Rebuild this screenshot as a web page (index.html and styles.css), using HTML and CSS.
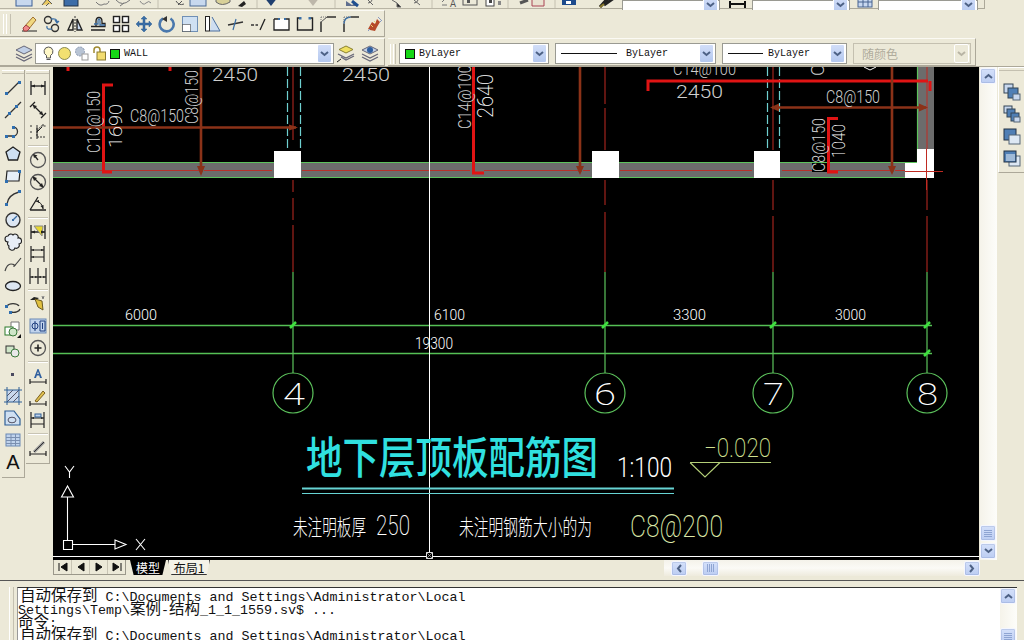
FILE: index.html
```html
<!DOCTYPE html>
<html lang="zh-CN">
<head>
<meta charset="utf-8">
<title>AutoCAD</title>
<link rel="stylesheet" href="styles.css">
</head>
<body>
<div class="app">
  <div class="row1">
    <div class="r1-icons">
      <svg class="clip" width="590" height="9" viewBox="0 0 590 9"><g class="c1">
        <rect x="16" y="-6" width="16" height="12" fill="#c7d8ee" stroke="#3a5f95"/>
        <path d="M42 5l5-6 5 5M46 6l3-3" fill="#e8c860" stroke="#555"/>
        <rect x="64" y="-5" width="14" height="11" fill="#3d6da8" stroke="#234"/>
        <path d="M96 2q4 5 8 2q4 1 5-3" fill="none" stroke="#777"/>
        <path d="M116 0q6 7 14 0M120 6l4-3" fill="none" stroke="#777"/>
        <path d="M140 1q3 5 6 2t5 0" fill="none" stroke="#888"/>
        <path d="M178 5l4-4M176 1q3 5 8 3" fill="none" stroke="#555"/>
        <rect x="190" y="-6" width="16" height="12" fill="#c7d8ee" stroke="#4a6a95"/>
        <path d="M216 2q6 5 14 0v-3h-14z" fill="#d8d098" stroke="#666"/>
        <path d="M238 6l6-5 2 3-4 3z" fill="#222"/>
        <path d="M264 -3h14l-7 9z" fill="#1f3f6f"/>
        <path d="M306 -3h14l-7 9z" fill="#bdb7aa"/>
        <path d="M346 1l6 4 4-3v4h-10z" fill="#5f6f8f"/><path d="M352 1l6 5" stroke="#1f4f8f" stroke-width="3"/>
        <path d="M368 0l5 5M372 0a4 4 0 0 1-4 3" fill="none" stroke="#666"/>
        <path d="M392 0l5 3M397 3v4h4z" fill="#222" stroke="#666"/>
        <path d="M414 0l6 5M418 0a4 4 0 0 1-4 3" fill="none" stroke="#666"/>
        <path d="M442 2l3-3M442 5h5" fill="none" stroke="#777"/>
        <text class="r1-a" x="450" y="7">A</text>
        <rect x="463" y="-4" width="14" height="9" fill="none" stroke="#555"/><rect x="467" y="-1" width="3" height="4" fill="#555"/>
        <rect x="486" y="-4" width="8" height="10" fill="#fff" stroke="#444"/><rect x="489" y="0" width="3" height="3" fill="#444"/>
        <rect x="498" y="1" width="3" height="4" fill="#888"/>
        <path d="M520 3l8-3" stroke="#555" stroke-width="3"/>
        <path d="M532 -2h12v8h-12z" fill="#e9e2d0" stroke="#a45"/>
        <path d="M562 -6h14v11h-14z" fill="#1c4a8c"/><rect x="566" y="1" width="5" height="3" fill="#fff"/>
      </g>
      <path d="M158 0v8M257 0v8M335 0v8M432 0v8M508 0v8M555 0v8" stroke="#c4c0b0"/></svg>
    </div>
    <div class="r1-mid">
      <svg class="r1-ic" width="22" height="9" viewBox="0 0 22 9"><path d="M4 7l8-9M8 5l10-7" stroke="#222" stroke-width="3" fill="none"/><path d="M4 7l4-3" stroke="#8a7a2a" stroke-width="2"/></svg>
      <div class="combo r1-combo c98"><span class="mono">–</span><span class="cbtn"><svg class="chev" width="9" height="6" viewBox="0 0 9 6"><path d="M1 1l3.5 3L8 1" /></svg></span></div>
      <svg class="r1-ic" width="22" height="9" viewBox="0 0 22 9"><path d="M4 4h15M4 1v7M19 1v7" stroke="#111" stroke-width="2" fill="none"/></svg>
      <div class="combo r1-combo c98"><span class="cbtn"><svg class="chev" width="9" height="6" viewBox="0 0 9 6"><path d="M1 1l3.5 3L8 1" /></svg></span></div>
      <svg class="r1-ic r1-last" width="22" height="9" viewBox="0 0 22 9"><rect x="4" y="-3" width="14" height="10" fill="#c8d8f0" stroke="#47638f"/><path d="M4 2h14M9 -3v10M14 -3v10" stroke="#47638f"/></svg>
      <div class="combo r1-combo c100"><span class="cbtn"><svg class="chev" width="9" height="6" viewBox="0 0 9 6"><path d="M1 1l3.5 3L8 1" /></svg></span></div>
    </div>
  </div>

  <div class="row2">
    <div class="tb-h t-mod">
      <span class="handle"></span>
      <svg class="ih" viewBox="0 0 18 18"><path d="M2 16h15" stroke="#222"/><path d="M4 12L13 2l3 3-8 10z" fill="#f0d880" stroke="#a07030"/><path d="M3 13l3-3 4 3-3 3H4z" fill="#e88" stroke="#a04040"/></svg>
      <svg class="ih" viewBox="0 0 18 18"><circle cx="5" cy="5" r="3.5" fill="none" stroke="#333" stroke-width="1.4"/><circle cx="12" cy="13" r="3.5" fill="none" stroke="#333" stroke-width="1.4"/><path d="M8 4q6-1 6 3M9 14q-6 1-5-3M12 5l2 3 2-2" fill="none" stroke="#3a6ea5" stroke-width="1.3"/></svg>
      <svg class="ih" viewBox="0 0 18 18"><path d="M9 1v16" stroke="#333" stroke-dasharray="2 1"/><path d="M7 4v11H2z" fill="none" stroke="#222" stroke-width="1.4"/><path d="M11 4v11h5z" fill="#c8d8ee" stroke="#222" stroke-width="1.4"/></svg>
      <svg class="ih" viewBox="0 0 18 18"><path d="M2 15h14M2 11.500h5v-5q0-4 3-4t3 4v2h3v3z" fill="none" stroke="#222" stroke-width="1.3"/><path d="M5 9h4V6q0-2 1-2t1 2v4h5" fill="none" stroke="#3a6ea5" stroke-width="1.3"/></svg>
      <svg class="ih" viewBox="0 0 18 18"><g fill="#fff" stroke="#222" stroke-width="1.4"><rect x="1.500" y="1.500" width="6" height="6"/><rect x="10.500" y="1.500" width="6" height="6"/><rect x="1.500" y="10.500" width="6" height="6"/><rect x="10.500" y="10.500" width="6" height="6"/></g></svg>
      <svg class="ih" viewBox="0 0 18 18"><path d="M9 1l3 3h-2v4h4V6l3 3-3 3v-2h-4v4h2l-3 3-3-3h2v-4H4v2L1 9l3-3v2h4V4H6z" fill="#3a6ea5" stroke="#2f5f95" stroke-width=".5"/></svg>
      <svg class="ih" viewBox="0 0 18 18"><path d="M12.500 3.500A7 7 0 1 1 5 3.400" fill="none" stroke="#4a78ad" stroke-width="2.600"/><path d="M9 1v6l-5-3z" fill="#333"/></svg>
      <svg class="ih" viewBox="0 0 18 18"><rect x="1.500" y="1.500" width="15" height="15" fill="#cfe0f2" stroke="#6f8fb5"/><rect x="1.500" y="9.500" width="8" height="7" fill="#fff" stroke="#222" stroke-dasharray="1 1"/></svg>
      <svg class="ih" viewBox="0 0 18 18"><path d="M6 16h10L8 2" fill="#cfdef0" stroke="#4a6f9f"/><rect x="1.500" y="1.500" width="4" height="14.500" fill="#fff" stroke="#222"/></svg>
      <svg class="ih" viewBox="0 0 18 18"><path d="M1 10l15-3" stroke="#333" stroke-width="1.300"/><path d="M9 4l-3 11" stroke="#3a6ea5" stroke-width="1.200"/></svg>
      <svg class="ih" viewBox="0 0 18 18"><path d="M1 10h7" stroke="#333" stroke-width="1.300" stroke-dasharray="3 1.500"/><path d="M15 4l-5 11" stroke="#222" stroke-width="1.300"/></svg>
      <svg class="ih" viewBox="0 0 18 18"><path d="M1 4v11h15V4h-4M6 4H1" fill="#fff" stroke="#222" stroke-width="1.300"/><rect x="5" y="3" width="2" height="2" fill="#3a6ea5"/><rect x="11" y="3" width="2" height="2" fill="#3a6ea5"/></svg>
      <svg class="ih" viewBox="0 0 18 18"><path d="M4 3H1.500v12h15V3H14" fill="none" stroke="#222" stroke-width="1.400"/><rect x="3" y="2" width="2.500" height="2.500" fill="#3a6ea5"/><rect x="12.500" y="2" width="2.500" height="2.500" fill="#3a6ea5"/></svg>
      <svg class="ih" viewBox="0 0 18 18"><path d="M2 17V7" stroke="#222" stroke-width="1.400"/><path d="M8 2h9" stroke="#222" stroke-width="1.400"/><path d="M2 7l6-5" stroke="#555"/><path d="M2 2v5M2 2h6" stroke="#777" stroke-dasharray="1 1"/></svg>
      <svg class="ih" viewBox="0 0 18 18"><path d="M2 17V9" stroke="#222" stroke-width="1.400"/><path d="M9 2h8" stroke="#222" stroke-width="1.400"/><path d="M2 9q0-7 7-7" fill="none" stroke="#3a6ea5" stroke-width="1.500"/><path d="M2 2v7M2 2h7" stroke="#777" stroke-dasharray="1 1"/></svg>
      <svg class="ih" viewBox="0 0 18 18"><path d="M3 14l4-7 3 2 2-5 3 3-3 5-2 4-5-1z" fill="#b64a2a"/><path d="M6 10l2 2M9 6l2 2" stroke="#f0d070"/><path d="M13 2l3 3M3 16l2-2M15 7l2-2" stroke="#8a9ac0"/></svg>
    </div>
  </div>

  <div class="row3">
    <div class="tb-h t-layer">
      <svg class="ih lay1" viewBox="0 0 18 18"><path d="M9 9L1 5l8-4 8 4z" fill="#c0cfe6" stroke="#667"/><path d="M1 9l8 4 8-4M1 12l8 4 8-4" fill="none" stroke="#667" stroke-width="1.200"/></svg>
      <div class="combo c299">
        <svg class="li" width="13" height="15" viewBox="0 0 13 15"><path d="M6.500 1a4.500 4.500 0 0 0-2 8.500V12h4V9.500a4.500 4.500 0 0 0-2-8.500z" fill="#fff8c8" stroke="#555"/><path d="M4.500 13.500h4" stroke="#555"/></svg>
        <svg class="li" width="15" height="15" viewBox="0 0 15 15"><circle cx="7.500" cy="7.500" r="6" fill="#f2e070" stroke="#8a8a50"/></svg>
        <svg class="li" width="16" height="15" viewBox="0 0 16 15"><circle cx="6" cy="5.500" r="4.500" fill="#b8c4d4" stroke="#8a98b0" stroke-dasharray="2 1"/><rect x="8" y="8" width="6" height="6" fill="#fff" stroke="#999"/></svg>
        <svg class="li" width="15" height="15" viewBox="0 0 15 15"><path d="M2 7V4a3 3 0 0 1 6 0v2" fill="none" stroke="#a08a30" stroke-width="1.500"/><rect x="5" y="6" width="8.500" height="8" fill="#f2dc70" stroke="#8a7a30"/></svg>
        <span class="sw"></span><span class="mono wall">WALL</span>
        <span class="cbtn"><svg class="chev" width="9" height="6" viewBox="0 0 9 6"><path d="M1 1l3.500 3L8 1"/></svg></span>
      </div>
      <svg class="ih lay2" viewBox="0 0 18 18"><path d="M9 8L2 4.500 9 1l7 3.500z" fill="#f0e060" stroke="#8a8030"/><path d="M1 9l8 4 8-4M4 12l5 3 8-4" fill="none" stroke="#667" stroke-width="1.200"/><path d="M0 17l4-3" stroke="#222"/></svg>
      <svg class="ih lay3" viewBox="0 0 18 18"><path d="M9 9L1 5l8-4 8 4z" fill="#c0cfe6" stroke="#667"/><path d="M1 9l8 4 8-4M1 12l8 4 8-4" fill="none" stroke="#667" stroke-width="1.200"/><circle cx="9" cy="5" r="3" fill="#2f5f9f"/></svg>
    </div>
    <div class="tb-h t-prop">
      <span class="handle h-prop"></span>
      <div class="combo c150"><span class="sw sw-b"></span><span class="mono">ByLayer</span><span class="cbtn"><svg class="chev" width="9" height="6" viewBox="0 0 9 6"><path d="M1 1l3.500 3L8 1"/></svg></span></div>
      <div class="combo c160"><span class="ln l56"></span><span class="mono">ByLayer</span><span class="cbtn"><svg class="chev" width="9" height="6" viewBox="0 0 9 6"><path d="M1 1l3.500 3L8 1"/></svg></span></div>
      <div class="combo c125"><span class="ln l35"></span><span class="mono">ByLayer</span><span class="cbtn"><svg class="chev" width="9" height="6" viewBox="0 0 9 6"><path d="M1 1l3.500 3L8 1"/></svg></span></div>
      <div class="combo c118 dis"><span class="distext">随颜色</span><span class="cbtn"><svg class="chev" width="9" height="6" viewBox="0 0 9 6"><path d="M1 1l3.500 3L8 1"/></svg></span></div>
    </div>
  </div>

  <div class="main">
    <div class="left">
      <div class="tb-v">
        <span class="vh"></span>
        <svg class="iv" viewBox="0 0 18 18"><path d="M3 15L15 3" stroke="#333" stroke-width="1.300"/><rect x="1" y="13" width="3" height="3" fill="#2f6fb0"/><rect x="14" y="2" width="3" height="3" fill="#2f6fb0"/></svg>
        <svg class="iv" viewBox="0 0 18 18"><path d="M1 17L17 1" stroke="#333" stroke-width="1.300"/><rect x="4" y="11" width="3" height="3" fill="#2f6fb0"/><rect x="11" y="4" width="3" height="3" fill="#2f6fb0"/></svg>
        <svg class="iv" viewBox="0 0 18 18"><path d="M2 13h7M9 13a4.500 4.500 0 0 0 0-9" fill="none" stroke="#333" stroke-width="1.300"/><rect x="1" y="12" width="3" height="3" fill="#2f6fb0"/><rect x="8" y="12" width="3" height="3" fill="#2f6fb0"/><rect x="8" y="3" width="3" height="3" fill="#2f6fb0"/></svg>
        <svg class="iv" viewBox="0 0 18 18"><path d="M9 2l7 5-2.500 8h-9L2 7z" fill="#cfe0f2" stroke="#222" stroke-width="1.300"/></svg>
        <svg class="iv" viewBox="0 0 18 18"><path d="M3 4h13l-1 10H2z" fill="#e6eef8" stroke="#222" stroke-width="1.200"/><rect x="1" y="13" width="3" height="3" fill="#2f6fb0"/><rect x="14" y="3" width="3" height="3" fill="#2f6fb0"/></svg>
        <svg class="iv" viewBox="0 0 18 18"><path d="M3 15q1-9 12-12" fill="none" stroke="#333" stroke-width="1.300"/><rect x="1" y="14" width="3" height="3" fill="#2f6fb0"/><rect x="14" y="1" width="3" height="3" fill="#2f6fb0"/></svg>
        <svg class="iv" viewBox="0 0 18 18"><circle cx="9" cy="9" r="7" fill="#dce6f2" stroke="#333" stroke-width="1.400"/><path d="M9 9l4-4" stroke="#3a6ea5" stroke-width="1.200"/><rect x="8" y="8" width="2" height="2" fill="#3a6ea5"/></svg>
        <svg class="iv" viewBox="0 0 18 18"><path d="M4 9a3 3 0 0 1 0-6 3 3 0 0 1 5-1 3 3 0 0 1 5 3 3 3 0 0 1 1 6 3 3 0 0 1-4 4 3 3 0 0 1-6-2 3 3 0 0 1-1-4z" fill="#e8eef6" stroke="#222" stroke-width="1.100"/></svg>
        <svg class="iv" viewBox="0 0 18 18"><path d="M1 16q2-7 6-7t3 2 7-8" fill="none" stroke="#444" stroke-width="1.200"/></svg>
        <svg class="iv" viewBox="0 0 18 18"><ellipse cx="9" cy="9" rx="7.500" ry="4.500" fill="#dce6f2" stroke="#222" stroke-width="1.300"/></svg>
        <svg class="iv" viewBox="0 0 18 18"><path d="M3 7a6.500 4 0 0 1 12 0M16 10a6.500 4 0 0 1-9 3" fill="none" stroke="#333" stroke-width="1.300"/><rect x="1" y="6" width="3" height="3" fill="#2f6fb0"/><rect x="5" y="12" width="3" height="3" fill="#2f6fb0"/></svg>
        <svg class="iv" viewBox="0 0 18 18"><path d="M7 1h8v8H7z" fill="#fff" stroke="#777"/><rect x="1" y="6" width="8" height="8" fill="#fff" stroke="#2a7a2a"/><circle cx="9" cy="11" r="4" fill="#cfe5c8" stroke="#3a7a3a"/><path d="M17 17h-4l4-4z" fill="#111"/></svg>
        <svg class="iv" viewBox="0 0 18 18"><rect x="2" y="3" width="8" height="7" fill="#cfe5c8" stroke="#333"/><circle cx="11" cy="10" r="4" fill="#e8e8e8" stroke="#3a7a3a"/></svg>
        <svg class="iv" viewBox="0 0 18 18"><rect x="7" y="8" width="3" height="3" fill="#4a4a60"/></svg>
        <svg class="iv" viewBox="0 0 18 18"><rect x="3" y="3" width="12" height="12" fill="#c8d8ec"/><path d="M3 9l6-6M3 15L15 3M9 15l6-6" stroke="#556" /><path d="M3 0v18M15 0v18M0 3h18M0 15h18" stroke="#2f5f95"/></svg>
        <svg class="iv" viewBox="0 0 18 18"><path d="M1 2h9l6 8v6H1z" fill="#cfe0f2" stroke="#2f5f95" stroke-width="1.200"/><ellipse cx="8" cy="11" rx="4" ry="2.800" fill="none" stroke="#556"/></svg>
        <svg class="iv" viewBox="0 0 18 18"><rect x="2" y="3" width="14" height="12" fill="#c0d3ec" stroke="#6a8ab5"/><path d="M2 6.500h14M2 9.500h14M2 12.500h14M7 3v12M11.500 3v12" stroke="#7a8fb0"/></svg>
        <span class="iv-a">A</span>
      </div>
      <div class="tb-v t2">
        <span class="vh"></span>
        <svg class="iv" viewBox="0 0 18 18"><path d="M2 2v14M16 2v14" stroke="#222" stroke-width="1.300"/><path d="M2 7h14" stroke="#222" stroke-width="1.300"/><path d="M2 7l4-1.500v3zM16 7l-4-1.500v3z" fill="#222"/></svg>
        <svg class="iv" viewBox="0 0 18 18"><path d="M1 6l5-5M12 17l5-5" stroke="#222" stroke-width="1.300"/><path d="M4 4l10 10" stroke="#222" stroke-width="1.300"/><path d="M4 4l4 1-3 3zM14 14l-4-1 3-3z" fill="#222"/></svg>
        <svg class="iv" viewBox="0 0 18 18"><path d="M8 2v6l4-5h5M8 8v6M8 14h8M1 3h3M1 9h3M1 15h3M14 1v3" fill="none" stroke="#333" stroke-dasharray="2 1"/><path d="M8 4v12M8 9l5-5" stroke="#222" fill="none"/></svg>
        <span class="vsep"></span>
        <svg class="iv" viewBox="0 0 18 18"><circle cx="9" cy="9" r="7.500" fill="none" stroke="#555" stroke-width="1.300"/><path d="M9 9L5 4" stroke="#222" stroke-width="1.300"/><path d="M4 3l4.500 1.500L5 7z" fill="#222"/></svg>
        <svg class="iv" viewBox="0 0 18 18"><circle cx="9" cy="9" r="7.500" fill="none" stroke="#555" stroke-width="1.300"/><path d="M4 4l10 10" stroke="#222" stroke-width="1.300"/><path d="M3.500 3.500l4.500 1.500-3 3zM14.500 14.500l-4.500-1.500 3-3z" fill="#222"/></svg>
        <svg class="iv" viewBox="0 0 18 18"><path d="M1 15h16M1 15L9 2" stroke="#222" stroke-width="1.300" fill="none"/><path d="M7 6q6 1 7 8" stroke="#222" fill="none"/><path d="M14.500 14l-3-3 3-1zM7 6l3-1v3z" fill="#222"/></svg>
        <span class="vsep"></span>
        <svg class="iv" viewBox="0 0 18 18"><path d="M2 2v14M16 2v14M2 9h14" stroke="#222" stroke-width="1.300"/><path d="M5 3l9 0-1 10z" fill="#e8d830" stroke="#888"/><path d="M2 9l4-1.500v3zM16 9l-4-1.500v3z" fill="#222"/></svg>
        <svg class="iv" viewBox="0 0 18 18"><path d="M2 1v16M15 1v16M2 5h13M2 12h13" stroke="#222" stroke-width="1.200"/><path d="M2 5l3-1v2zM15 5l-3-1v2zM2 12l3-1v2z" fill="#222"/></svg>
        <svg class="iv" viewBox="0 0 18 18"><path d="M1 1v16M9 1v16M17 1v16M1 10h16" stroke="#222" stroke-width="1.200"/><path d="M1 10l3-1v2zM9 10l-3-1v2zM9 10l3-1v2zM17 10l-3-1v2z" fill="#222"/></svg>
        <span class="vsep"></span>
        <svg class="iv" viewBox="0 0 18 18"><path d="M1 5l4-3 5 1-3 2z" fill="#222"/><path d="M6 4l7 2 1 9-5-3z" fill="#e0c040" stroke="#6a5a20"/><path d="M13 1l1 3M15 1l-1 3" stroke="#777"/></svg>
        <svg class="iv" viewBox="0 0 18 18"><rect x="1" y="2" width="16" height="14" fill="#c0d3ec" stroke="#6a8ab5"/><circle cx="6" cy="9" r="3" fill="none" stroke="#1f3f7f"/><path d="M6 4v10M11 4h5v10h-5zM13.500 6v6" fill="none" stroke="#1f3f7f"/></svg>
        <svg class="iv" viewBox="0 0 18 18"><circle cx="9" cy="9" r="7.500" fill="none" stroke="#555" stroke-width="1.300"/><path d="M9 5.500v7M5.500 9h7" stroke="#222" stroke-width="1.600"/></svg>
        <span class="vsep"></span>
        <svg class="iv" viewBox="0 0 18 18"><path d="M1 12v5M17 12v5M1 15h16" stroke="#222" stroke-width="1.200"/><path d="M5 11l3.500-9h1L13 11h-2l-.8-2.500H7.800L7 11zM8.200 7h1.600L9 4.500z" fill="#2f5f9f"/></svg>
        <svg class="iv" viewBox="0 0 18 18"><path d="M1 12v5M17 12v5M1 15h16" stroke="#222" stroke-width="1.200"/><path d="M6 12l8-10 2 2-8 9z" fill="#e0c050" stroke="#7a6020"/></svg>
        <svg class="iv" viewBox="0 0 18 18"><path d="M2 1v16M15 1v16M2 7h13M2 13h13" stroke="#222" stroke-width="1.200"/><path d="M2 7l3-1v2zM15 7l-3-1v2z" fill="#222"/><rect x="6" y="3" width="6" height="3" fill="#c0d3ec" stroke="#2f5f95"/></svg>
        <span class="vsep"></span>
        <svg class="iv" viewBox="0 0 18 18"><path d="M1 12v5M17 12v5M1 15h16" stroke="#222" stroke-width="1.200"/><path d="M5 13L15 3" stroke="#999" stroke-width="3"/><path d="M5 13L15 3" stroke="#333"/></svg>
      </div>
    </div>

    <div class="center">
      <div class="canvas-row">
        <div class="canvas">
          <svg class="draw" width="926" height="493" viewBox="53 67 926 493">
            <rect class="band" x="53" y="162" width="852" height="16"/>
            <rect class="band" x="917" y="67" width="17" height="83"/>
            <path class="g" d="M53 162.500H917M53 177.500H905M917.500 67V162"/>
            <path class="rc" d="M53 170.500H200M204 170.500H272M302 170.500H470M484 170.500H578M583 170.500H590M620 170.500H752M782 170.500H890M895 170.500H905" />
            <path class="rt" d="M293 67V140M293 180V192M293 198V220M293 225V272M605 67V104M605 108V150M605 180V205M605 212V272M773 67V150M773 180V210M773 216V272M927 67V150M927 180V210M927 216V272"/>
            <path class="cy" d="M287.500 67V150M300.500 67V150M767.500 67V151M779.500 67V151"/>
            <path class="rb" d="M113 85H103.500V172H112"/>
            <path class="rb" d="M473.500 67V173H484"/>
            <path class="rb" d="M648 91V81H928M930 81V91"/>
            <path class="rb" d="M838 118.500H828.500V172H838"/>
            <path class="rb" d="M68 67V71M170 67V71"/>
            <path class="br" d="M53 127.500H296M201 67V172M580 67V172M892 67V172M772 107.500H926"/>
            <path class="brf" d="M298 127.500l-9-3v6zM201 176l-4-10h8zM580 175l-4-9h8zM892 175l-4-9h8zM770 107.500l9-4v8zM928 107.500l-9-4v8z"/>
            <rect class="blk" x="812" y="163" width="15" height="9"/>
            <rect class="wh" x="274" y="151" width="27" height="27"/>
            <rect class="wh" x="592" y="151" width="27" height="27"/>
            <rect class="wh" x="754" y="151" width="26" height="27"/>
            <path class="wh" d="M917 149h17v29h-29v-15h12z"/>
            <path class="rt" d="M905 171.500H943M926.500 149V190"/>
            <path class="g" d="M293 272V373M605 272V373M773 272V373M927 272V373"/>
            <path class="gh" d="M53 325.400H932M53 353.400H932"/>
            <path class="gt" d="M290 328l6-6M602 328l6-6M770 328l6-6M924 328l6-6M924 356l6-6"/>
            <circle class="g" cx="293" cy="393" r="20"/>
            <circle class="g" cx="605" cy="393" r="20"/>
            <circle class="g" cx="773" cy="393" r="20"/>
            <circle class="g" cx="927" cy="393" r="20"/>
            <path class="cross" d="M429.500 67V556"/>
            <text class="t gr" x="212" y="81" font-size="18" textLength="46" lengthAdjust="spacingAndGlyphs">2450</text>
            <text class="t gr" x="342" y="81" font-size="18" textLength="48" lengthAdjust="spacingAndGlyphs">2450</text>
            <text class="t gr" transform="translate(100 153) rotate(-90)" font-size="18" textLength="62" lengthAdjust="spacingAndGlyphs">C1C@150</text>
            <text class="t big" transform="translate(122 148) rotate(-90)" font-size="19" textLength="44" lengthAdjust="spacingAndGlyphs">1690</text>
            <text class="t gr" x="130" y="122" font-size="18" textLength="54" lengthAdjust="spacingAndGlyphs">C8@150</text>
            <text class="t gr" transform="translate(198 124) rotate(-90)" font-size="18" textLength="54" lengthAdjust="spacingAndGlyphs">C8@150</text>
            <text class="t gr" transform="translate(471 129) rotate(-90)" font-size="18" textLength="64" lengthAdjust="spacingAndGlyphs">C14@100</text>
            <text class="t big" transform="translate(493 118) rotate(-90)" font-size="22" textLength="44" lengthAdjust="spacingAndGlyphs">2640</text>
            <text class="t gr" x="673" y="75" font-size="17" textLength="63" lengthAdjust="spacingAndGlyphs">C14@100</text>
            <text class="t gr" x="676" y="98" font-size="18" textLength="47" lengthAdjust="spacingAndGlyphs">2450</text>
            <text class="t gr" x="826" y="103" font-size="18" textLength="54" lengthAdjust="spacingAndGlyphs">C8@150</text>
            <text class="t gr" transform="translate(825 172) rotate(-90)" font-size="18" textLength="54" lengthAdjust="spacingAndGlyphs">C8@150</text>
            <text class="t big" transform="translate(845 158) rotate(-90)" font-size="18" textLength="34" lengthAdjust="spacingAndGlyphs">1040</text>
            <text class="t gr" transform="translate(824 76) rotate(-90)" font-size="18">C</text>
            <path class="cross" d="M864 67l6 3 6-3"/>
            <text class="t wt" x="125" y="320" font-size="15" textLength="32" lengthAdjust="spacingAndGlyphs">6000</text>
            <text class="t wt" x="434" y="320" font-size="15" textLength="31" lengthAdjust="spacingAndGlyphs">6100</text>
            <text class="t wt" x="415" y="349" font-size="16" textLength="38" lengthAdjust="spacingAndGlyphs">19300</text>
            <text class="t wt" x="673" y="320" font-size="15" textLength="33" lengthAdjust="spacingAndGlyphs">3300</text>
            <text class="t wt" x="835" y="320" font-size="15" textLength="31" lengthAdjust="spacingAndGlyphs">3000</text>
            <text class="t big" x="283" y="405" font-size="32" textLength="22" lengthAdjust="spacingAndGlyphs">4</text>
            <text class="t big" x="594" y="405" font-size="32" textLength="22" lengthAdjust="spacingAndGlyphs">6</text>
            <text class="t big" x="763" y="405" font-size="32" textLength="21" lengthAdjust="spacingAndGlyphs">7</text>
            <text class="t big" x="917" y="405" font-size="32" textLength="21" lengthAdjust="spacingAndGlyphs">8</text>
            <text class="title" x="306" y="474" textLength="292" lengthAdjust="spacingAndGlyphs">地下层顶板配筋图</text>
            <text class="t wt" x="617" y="477" font-size="27" textLength="55" lengthAdjust="spacingAndGlyphs">1:100</text>
            <text class="t yg" x="704" y="457" font-size="26" textLength="67" lengthAdjust="spacingAndGlyphs">−0.020</text>
            <path class="ygl" d="M690 462.500H771M690 462.500L705 477L720 462.500"/>
            <path class="cyl2" d="M302 488.500H674"/>
            <path class="cyl1" d="M302 493.500H674"/>
            <text class="note" x="293" y="535" textLength="73" lengthAdjust="spacingAndGlyphs">未注明板厚</text>
            <text class="t big" x="376" y="535" font-size="27" textLength="34" lengthAdjust="spacingAndGlyphs">250</text>
            <text class="note" x="459" y="535" textLength="133" lengthAdjust="spacingAndGlyphs">未注明钢筋大小的为</text>
            <text class="t yg2" x="630" y="537" font-size="31" textLength="93" lengthAdjust="spacingAndGlyphs">C8@200</text>
            <path class="ucs" d="M67.500 497V540M72 544.500H115M115 540l11 4.500-11 4.500zM67.500 486l-6 11h12zM63.500 540.500h9v9h-9zM65 466l4.500 6 4.500-6M69.500 472v6M136 539l9 11M145 539l-9 11"/>
            <rect class="wl" x="53" y="556" width="926" height="1"/>
            <rect class="pick" x="426.500" y="552.500" width="6" height="6"/>
            <path class="pickx" d="M426 552l7 7M433 552l-7 7"/>
          </svg>
        </div>
        <div class="vscroll">
          <span class="sb up"><svg class="chev" width="9" height="6" viewBox="0 0 9 6"><path d="M1 5l3.500-3L8 5"/></svg></span>
          <span class="vspace"></span>
          <span class="sb thumb-v"><i></i><i></i><i></i><i></i></span>
          <span class="sb dn"><svg class="chev" width="9" height="6" viewBox="0 0 9 6"><path d="M1 1l3.500 3L8 1"/></svg></span>
        </div>
        <div class="right-tb">
          <span class="vh"></span>
          <svg class="ir" viewBox="0 0 18 18"><rect x="1" y="1" width="9" height="9" fill="#c8d8ee" stroke="#345"/><rect x="5" y="5" width="10" height="10" fill="#4f7fb5" stroke="#345"/><rect x="10" y="11" width="7" height="6" fill="#c8d8ee" stroke="#567"/></svg>
          <svg class="ir" viewBox="0 0 18 18"><rect x="1" y="1" width="8" height="7" fill="#c8d8ee" stroke="#345"/><rect x="4" y="4" width="8" height="8" fill="#4f7fb5" stroke="#345"/><rect x="8" y="8" width="8" height="8" fill="#4f7fb5" stroke="#345"/><rect x="11" y="12" width="6" height="5" fill="#c8d8ee" stroke="#567"/></svg>
          <svg class="ir" viewBox="0 0 18 18"><rect x="1" y="2" width="12" height="11" fill="#4f7fb5" stroke="#234"/><rect x="6" y="8" width="11" height="9" fill="#dde8f4" stroke="#567"/></svg>
          <svg class="ir" viewBox="0 0 18 18"><rect x="6" y="7" width="11" height="10" fill="#dde8f4" stroke="#567"/><rect x="1" y="2" width="12" height="11" fill="#4f7fb5" stroke="#234"/><rect x="3" y="5" width="9" height="7" fill="#9fbad8"/></svg>
        </div>
        <div class="right-fill"></div>
      </div>
      <div class="tab-row">
        <div class="navs">
          <span class="nav"><svg width="10" height="10" viewBox="0 0 10 10"><path d="M1 1v8M9 1v8L3 5z"/></svg></span>
          <span class="nav"><svg width="10" height="10" viewBox="0 0 10 10"><path d="M8 1v8L2 5z"/></svg></span>
          <span class="nav"><svg width="10" height="10" viewBox="0 0 10 10"><path d="M2 1v8l6-4z"/></svg></span>
          <span class="nav"><svg width="10" height="10" viewBox="0 0 10 10"><path d="M1 1v8l6-4zM9 1v8"/></svg></span>
        </div>
        <span class="tab on">模型</span>
        <span class="tab off">布局1</span>
        <div class="hscroll">
          <span class="sb hb"><svg class="chev" width="6" height="9" viewBox="0 0 6 9"><path d="M5 1L2 4.500 5 8"/></svg></span>
          <span class="sb thumb-h"><i></i><i></i><i></i><i></i></span>
          <span class="hspace"></span>
          <span class="sb hb"><svg class="chev" width="6" height="9" viewBox="0 0 6 9"><path d="M1 1l3 3.500L1 8"/></svg></span>
        </div>
        <div class="tab-fill"></div>
      </div>
    </div>
  </div>

  <div class="cmd">
    <span class="cmd-handle"></span>
    <div class="cmd-box">
      <div class="cmd-text">
        <p class="ind"><span class="cj">自动保存到</span> C:\Documents and Settings\Administrator\Local</p>
        <p>Settings\Temp\<span class="cj">案例</span>-<span class="cj">结构</span>_1_1_1559.sv$ ...</p>
        <p><span class="cj">命令</span>:</p>
        <p class="ind"><span class="cj">自动保存到</span> C:\Documents and Settings\Administrator\Local</p>
      </div>
      <div class="cmd-scroll">
        <span class="sb up"><svg class="chev" width="9" height="6" viewBox="0 0 9 6"><path d="M1 5l3.500-3L8 5"/></svg></span>
        <span class="cspace"></span>
        <span class="sb thumb-v"><i></i><i></i><i></i><i></i></span>
      </div>
    </div>
  </div>
</div>
</body>
</html>
```
FILE: styles.css
```css
* { box-sizing: border-box; }
html, body { margin: 0; padding: 0; }
body { width: 1024px; height: 640px; overflow: hidden; background: #ece9d8; font-family: "Liberation Sans", "Noto Sans CJK SC", sans-serif; }
.app { width: 1024px; height: 640px; display: flex; flex-direction: column; overflow: hidden; }

/* top rows */
.row1 { height: 10px; flex: none; display: flex; overflow: hidden; }
.r1-icons { width: 590px; height: 9px; border-bottom: 1px solid #b8b4a4; }
.clip { display: block; }
.r1-a { font: 10px "Liberation Mono", monospace; fill: #555; }
.r1-mid { display: flex; align-items: flex-start; padding: 0 0 0 3px; width: 395px; height: 9px; border-bottom: 1px solid #aca899; border-right: 1px solid #aca899; gap: 1px; }
.r1-ic { flex: none; margin: 0 3px; }
.r1-last { margin: 0 1px; }
.r1-combo { height: 8px; border-top: 0; margin-right: 2px; }
.r1-combo .cbtn { margin-top: -11px; }
.c98 { width: 98px; }
.c100 { width: 100px; }
.row2 { height: 27px; flex: none; display: flex; }
.tb-h { display: flex; align-items: center; border-right: 1px solid #aca899; border-bottom: 1px solid #aca899; border-top: 1px solid #fbfaf4; }
.t-mod { width: 385px; height: 27px; }
.handle { width: 8px; height: 20px; margin: 0 6px 0 3px; flex: none; border-left: 1px solid #fff; border-right: 1px solid #c4c0b0; box-shadow: inset 2px 0 #ece9d8, inset 3px 0 #fff; }
.ih { width: 18px; height: 18px; margin: 0 2.5px; flex: none; }
.row3 { height: 28px; flex: none; margin-top: 1px; display: flex; gap: 3px; }
.t-layer { width: 385px; height: 28px; padding-top: 3px; }
.t-prop { width: 588px; height: 28px; padding-top: 3px; }
.lay1 { margin: 0 2px 0 15px; }
.lay2 { margin: 0 2px 0 3px; }
.lay3 { margin: 0 2px 0 4px; }
.h-prop { margin: 0 3px 0 2px; width: 6px; }

.combo { display: flex; align-items: center; height: 21px; background: #fff; border: 1px solid #9a9a92; padding: 0 1px 0 5px; position: relative; flex: none; }
.c299 { width: 299px; padding-left: 6px; gap: 0; }
.c150 { width: 150px; }
.c160 { width: 161px; margin-left: 6px; }
.c125 { width: 125px; margin-left: 6px; }
.c118 { width: 118px; margin-left: 6px; }
.dis { background: #ece9d8; border-color: #c4c0b0; }
.distext { font: 12px "Noto Sans CJK SC", sans-serif; color: #b0ac9c; margin: 0 0 0 3px; }
.mono { font: 10px/12px "Liberation Mono", monospace; color: #111; }
.wall { margin-left: 4px; }
.li { flex: none; margin-right: 2px; }
.sw { width: 10px; height: 10px; background: #16d716; border: 1px solid #111; flex: none; margin-left: 1px; }
.sw-b { margin: 0 4px 0 0; }
.ln { height: 1px; background: #111; flex: none; }
.l56 { width: 56px; margin-right: 9px; }
.l35 { width: 35px; margin-right: 5px; }
.cbtn { margin-left: auto; width: 15px; height: 19px; background: linear-gradient(#d2def8, #b4c8ef); border-radius: 2px; border: 1px solid #fff; display: flex; align-items: center; justify-content: center; flex: none; }
.dis .cbtn { background: #ece9d8; }
.dis .chev path { stroke: #b8b4a4; }
.chev path { fill: none; stroke: #4d6185; stroke-width: 2; }

/* main */
.main { flex: none; height: 511px; display: flex; }
.left { width: 53px; flex: none; display: flex; align-items: flex-start; padding: 3px 2px 0 2px; border-top: 1px solid #aca899; }
.tb-v { width: 23px; display: flex; flex-direction: column; align-items: center; border-right: 1px solid #aca899; border-bottom: 1px solid #aca899; padding-bottom: 4px; flex: none; }
.t2 { margin-left: 1px; width: 24px; }
.vh { display: block; height: 4px; width: 100%; margin-bottom: 3px; border-top: 1px solid #fff; border-bottom: 1px solid #c4c0b0; flex: none; }
.iv { width: 18px; height: 18px; margin: 2px 0; flex: none; }
.iv-a { height: 22px; line-height: 22px; font: 20px/22px "Liberation Sans", sans-serif; color: #111; }
.vsep { height: 2px; width: 20px; margin: 2px 0; background: #c8c4b4; border-bottom: 1px solid #fff; flex: none; }
.center { flex: 1; min-width: 0; display: flex; flex-direction: column; }
.canvas-row { height: 494px; flex: none; display: flex; border-top: 1px solid #aca899; }
.canvas { width: 926px; height: 493px; background: #000; flex: none; }
.draw { display: block; }
.vscroll { width: 17px; flex: none; display: flex; flex-direction: column; background: linear-gradient(90deg, #f5f3ea, #fdfdfa); padding: 1px 0; margin-left: 1px; }
.sb { display: flex; align-items: center; justify-content: center; background: linear-gradient(#d4e0fa, #bccdf2); border: 1px solid #f4f6ff; border-radius: 2px; flex: none; box-shadow: 0 0 0 1px rgba(120,140,190,.25) inset; }
.vscroll .sb, .cmd-scroll .sb { width: 16px; height: 16px; }
.vspace { height: 441px; flex: none; }
.thumb-v { flex-direction: column; gap: 1px; margin-bottom: 2px; }
.thumb-v i, .thumb-h i { display: block; background: #8ea4d2; }
.thumb-v i { width: 8px; height: 1px; }
.right-tb { width: 26px; height: 106px; display: flex; flex-direction: column; align-items: center; border-left: 1px solid #fff; border-bottom: 1px solid #aca899; flex: none; margin-left: 1px; }
.ir { width: 18px; height: 18px; margin: 2px 0; flex: none; }
.right-tb .vh { margin-bottom: 10px; }
.right-fill { flex: 1; }
.tab-row { height: 17px; flex: none; display: flex; align-items: flex-start; }
.navs { width: 73px; height: 15px; display: flex; flex: none; border: 1px solid #9a978a; border-top: 0; }
.nav { flex: 1; display: flex; align-items: center; justify-content: center; border-right: 1px solid #c8c4b4; }
.nav:last-child { border-right: 0; }
.nav path { fill: #111; stroke: #111; }
.tab { font-size: 12px; line-height: 15px; height: 15px; flex: none; text-align: center; font-family: "Noto Sans CJK SC", sans-serif; }
.on { width: 36px; margin-left: 4px; background: #000; color: #fff; clip-path: polygon(0 0, 100% 0, 90% 100%, 10% 100%); }
.off { width: 42px; margin-left: 2px; background: #f4f2e8; color: #111; border-bottom: 1px solid #333; border-right: 1px solid #333; border-left: 1px solid #333; clip-path: polygon(0 0, 100% 0, 92% 100%, 8% 100%); }
.hscroll { margin-left: 454px; width: 316px; height: 16px; display: flex; align-items: center; background: linear-gradient(#f4f2ea, #fbfaf6 50%, #eeebdd); padding-left: 7px; flex: none; }
.hb { width: 16px; height: 15px; }
.thumb-h { width: 17px; height: 15px; margin-left: 15px; gap: 1px; }
.thumb-h i { width: 1px; height: 8px; }
.hspace { flex: 1; }
.tab-fill { flex: 1; }

/* command */
.cmd { height: 60px; flex: none; margin-top: 3px; border-top: 1px solid #555; display: flex; background: #ece9d8; padding-top: 6px; overflow: hidden; }
.cmd-handle { width: 5px; height: 60px; margin: 0 3px 0 9px; border-left: 1px solid #fff; border-right: 1px solid #c4c0b0; flex: none; }
.cmd-box { width: 1000px; height: 60px; flex: none; background: #fff; border-top: 1px solid #333; border-left: 1px solid #999; display: flex; }
.cmd-text { flex: 1; }
.cmd-text p { margin: 0; height: 13px; font: 13.330px/13px "Liberation Mono", "Noto Sans CJK SC", monospace; color: #111; white-space: pre; }
.ind { padding-left: 2px; }
.cj { font: 15.500px/13px "Noto Sans CJK SC", sans-serif; }
.cmd-scroll { width: 17px; flex: none; display: flex; flex-direction: column; background: linear-gradient(90deg, #f5f3ea, #fdfdfa); }
.cspace { height: 24px; flex: none; }

/* drawing */
.draw path, .draw circle { fill: none; }
.band { fill: #6c6c6c; }
.g { stroke: #5cc35c; stroke-width: 1.200; fill: none; }
.gh { stroke: #55c055; stroke-width: 1.500; }
.gt { stroke: #3fe03f; stroke-width: 2.500; }
.rc { stroke: #b8302a; stroke-width: 1.200; }
.rt { stroke: #c02a22; stroke-width: 1; }
.cy { stroke: #6fd0d0; stroke-width: 1.200; stroke-dasharray: 9 3; }
.rb { stroke: #e01414; stroke-width: 3; }
.br { stroke: #8b3218; stroke-width: 2.600; }
.draw .brf { fill: #8b3218; }
.blk { fill: #000; }
.wh, .draw path.wh { fill: #fff; }
.cross { stroke: #fff; stroke-width: 1; }
.t { font-family: Roboto, "Liberation Sans", sans-serif; font-weight: 300; }
.gr { fill: #cfcfcf; }
.wt { fill: #fff; }
.big { fill: #fff; font-weight: 200; }
.yg { fill: #d0e090; font-weight: 200; }
.yg2 { fill: #dce8a8; font-weight: 200; }
.title { font: 500 44px "Noto Sans CJK SC", sans-serif; fill: #30e0e0; }
.note { font: 300 22px "Noto Sans CJK SC", sans-serif; fill: #fff; }
.ygl { stroke: #b4cf78; stroke-width: 1.100; }
.cyl2 { stroke: #67d4d4; stroke-width: 2.200; }
.cyl1 { stroke: #67d4d4; stroke-width: 1; }
.ucs { stroke: #fff; stroke-width: 1.100; }
.wl { fill: #fff; }
.pick { fill: #000; stroke: #ddd; stroke-width: 1; }
.pickx { stroke: #bbb; stroke-width: .7; }
```
